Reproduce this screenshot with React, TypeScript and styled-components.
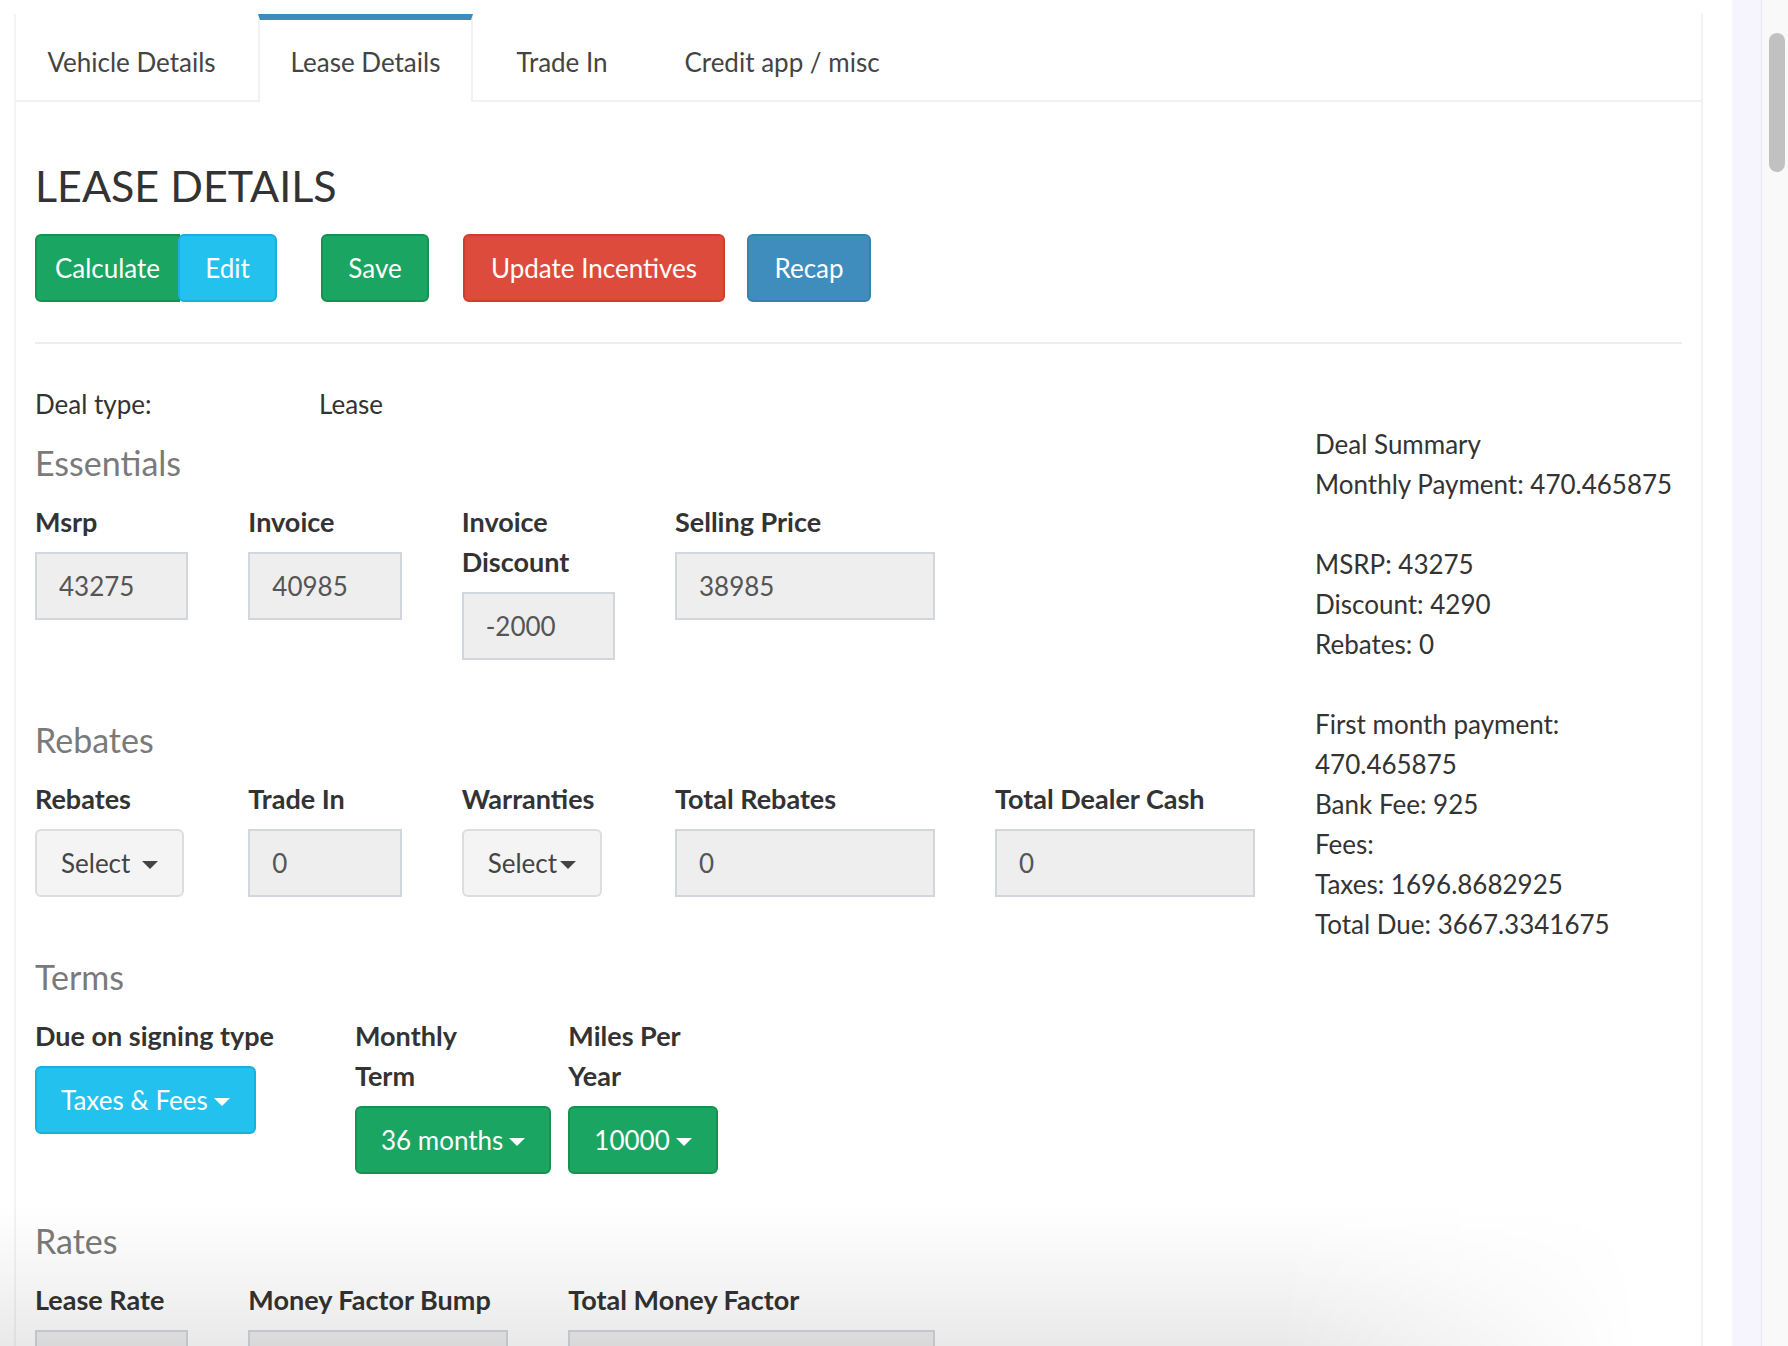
import React from "react";
import styled, { createGlobalStyle, css } from "styled-components";

const GlobalStyle = createGlobalStyle`
  * { box-sizing: border-box; }
  html, body { margin: 0; padding: 0; background: #fff; }
  body {
    font-family: Lato, "Liberation Sans", sans-serif;
    font-size: 26px;
    color: #333;
  }
  #root { height: 1346px; overflow: hidden; }
`;

const Viewport = styled.div`
  position: relative;
  display: flex;
  height: 1346px;
  overflow: hidden;
  background: #fff;
`;

const Main = styled.main`
  flex: 1;
  padding: 14px 0 0 14px;
`;

const Panel = styled.section`
  width: 1689px;
  min-height: 1400px;
  background: #fff;
  border-left: 2px solid #f3f3f3;
  border-right: 2px solid #f3f3f3;
`;

const TabList = styled.ul`
  display: flex;
  margin: 0;
  padding: 0;
  list-style: none;
  border-bottom: 2px solid #f2f2f2;
`;

const TabItem = styled.li<{ $active?: boolean; $w: number }>`
  width: ${(p) => p.$w}px;
  margin-right: 11px;
  margin-bottom: -2px;
  border-top: 6px solid ${(p) => (p.$active ? "#3c8dbc" : "transparent")};
  ${(p) =>
    p.$active &&
    css`
      background: #fff;
      border-left: 2px solid #f2f2f2;
      border-right: 2px solid #f2f2f2;
    `}
`;

const TabLink = styled.a`
  display: block;
  padding: 22px 0 20px;
  line-height: 40px;
  font-size: 26px;
  color: #444;
  text-align: center;
  text-decoration: none;
  white-space: nowrap;
`;

const TabContent = styled.div`
  padding: 60px 19px 0;
`;

const Title = styled.h1`
  margin: 0 0 24px;
  font-size: 43px;
  line-height: 48px;
  font-weight: 400;
  color: #333;
`;

const ActionBar = styled.div`
  display: flex;
  align-items: center;
`;

const palette = {
  success: { bg: "#1ba562", border: "#16924f", fg: "#fff" },
  info: { bg: "#22c1ee", border: "#18b1dc", fg: "#fff" },
  danger: { bg: "#dd4b3c", border: "#d23c2c", fg: "#fff" },
  primary: { bg: "#3f8dbd", border: "#3781ad", fg: "#fff" },
  default: { bg: "#f4f4f4", border: "#dddddd", fg: "#444" },
};

type Variant = keyof typeof palette;

const Btn = styled.button<{
  $variant: Variant;
  $w?: number;
  $ml?: number;
  $flatRight?: boolean;
}>`
  display: inline-flex;
  align-items: center;
  justify-content: center;
  height: 68px;
  ${(p) => p.$w && css`width: ${p.$w}px;`}
  margin-left: ${(p) => p.$ml ?? 0}px;
  padding: 12px 24px;
  font-family: inherit;
  font-size: 26px;
  line-height: 40px;
  white-space: nowrap;
  color: ${(p) => palette[p.$variant].fg};
  background: ${(p) => palette[p.$variant].bg};
  border: 2px solid ${(p) => palette[p.$variant].border};
  border-radius: ${(p) => (p.$flatRight ? "6px 0 0 6px" : "6px")};
  cursor: pointer;
`;

const ButtonGroup = styled.div`
  display: flex;
`;

const Caret = styled.span<{ $gap: number }>`
  display: inline-block;
  width: 0;
  height: 0;
  margin-left: ${(p) => p.$gap}px;
  margin-top: 4px;
  border-top: 8px solid currentColor;
  border-left: 8px solid transparent;
  border-right: 8px solid transparent;
`;

const Divider = styled.hr`
  margin: 40px 0;
  border: 0;
  border-top: 2px solid #eeeeee;
`;

const DealTypeRow = styled.div`
  display: flex;
  line-height: 40px;
`;

const DealTypeLabel = styled.span`
  width: 284px;
`;

const MainGrid = styled.div`
  display: grid;
  grid-template-columns: 1220px 1fr;
  column-gap: 60px;
`;

const SectionTitle = styled.h4`
  margin: 19px 0 19px;
  font-size: 34px;
  line-height: 40px;
  font-weight: 400;
  color: #7a7a7a;
`;

const FieldGrid = styled.div<{ $mb?: number }>`
  display: grid;
  grid-template-columns: repeat(12, 1fr);
  column-gap: 60px;
  align-items: start;
  margin-bottom: ${(p) => p.$mb ?? 60}px;
`;

const Field = styled.div<{ $span: number }>`
  grid-column: span ${(p) => p.$span};
  min-width: 0;
`;

const Label = styled.label`
  display: block;
  margin-bottom: 10px;
  font-weight: 700;
  font-size: 27px;
  line-height: 40px;
  color: #333;
`;

const Input = styled.input`
  display: block;
  width: 100%;
  height: 68px;
  padding: 12px 22px;
  font-family: inherit;
  font-size: 26px;
  line-height: 40px;
  color: #555;
  background: #eeeeee;
  border: 2px solid #d2d6de;
  border-radius: 0;
  outline: none;
`;

const Summary = styled.div`
  line-height: 40px;
  color: #333;
`;

const SummaryLine = styled.div`
  white-space: nowrap;
`;

const SummaryGap = styled.div`
  height: 40px;
`;

const BottomShade = styled.div`
  position: absolute;
  left: 0;
  bottom: 0;
  width: 1640px;
  height: 140px;
  pointer-events: none;
  background: linear-gradient(to bottom, rgba(0, 0, 0, 0) 0%, rgba(0, 0, 0, 0.035) 45%, rgba(0, 0, 0, 0.085) 100%);
  -webkit-mask-image: linear-gradient(to right, #000 0%, #000 78%, transparent 100%);
  mask-image: linear-gradient(to right, #000 0%, #000 78%, transparent 100%);
`;

const SideStrip = styled.div`
  width: 30px;
  background: #f6f5fd;
  border-right: 1px solid #e7e7ec;
`;

const ScrollTrack = styled.div`
  width: 26px;
  padding: 33px 2px 0 7px;
  background: #f9f9f9;
`;

const ScrollThumb = styled.div`
  width: 16px;
  height: 139px;
  border-radius: 8px;
  background: #c1c1c1;
`;

const tabs = [
  { label: "Vehicle Details", w: 231 },
  { label: "Lease Details", w: 215, active: true },
  { label: "Trade In", w: 156 },
  { label: "Credit app / misc", w: 262 },
];

export default function App() {
  return (
    <>
      <GlobalStyle />
      <Viewport>
        <Main>
          <Panel>
            <TabList>
              {tabs.map((t) => (
                <TabItem key={t.label} $active={t.active} $w={t.w}>
                  <TabLink>{t.label}</TabLink>
                </TabItem>
              ))}
            </TabList>
            <TabContent>
              <Title>LEASE DETAILS</Title>
              <ActionBar>
                <ButtonGroup>
                  <Btn $variant="success" $w={145} $flatRight>
                    Calculate
                  </Btn>
                  <Btn $variant="info" $w={99} $ml={-2}>
                    Edit
                  </Btn>
                </ButtonGroup>
                <Btn $variant="success" $w={108} $ml={44}>
                  Save
                </Btn>
                <Btn $variant="danger" $w={262} $ml={34}>
                  Update Incentives
                </Btn>
                <Btn $variant="primary" $w={124} $ml={22}>
                  Recap
                </Btn>
              </ActionBar>
              <Divider />
              <DealTypeRow>
                <DealTypeLabel>Deal type:</DealTypeLabel>
                <span>Lease</span>
              </DealTypeRow>
              <MainGrid>
                <div>
                  <SectionTitle>Essentials</SectionTitle>
                  <FieldGrid>
                    <Field $span={2}>
                      <Label>Msrp</Label>
                      <Input readOnly value="43275" />
                    </Field>
                    <Field $span={2}>
                      <Label>Invoice</Label>
                      <Input readOnly value="40985" />
                    </Field>
                    <Field $span={2}>
                      <Label>Invoice Discount</Label>
                      <Input readOnly value="-2000" />
                    </Field>
                    <Field $span={3}>
                      <Label>Selling Price</Label>
                      <Input readOnly value="38985" />
                    </Field>
                  </FieldGrid>

                  <SectionTitle>Rebates</SectionTitle>
                  <FieldGrid>
                    <Field $span={2}>
                      <Label>Rebates</Label>
                      <Btn $variant="default">
                        Select
                        <Caret $gap={12} />
                      </Btn>
                    </Field>
                    <Field $span={2}>
                      <Label>Trade In</Label>
                      <Input readOnly value="0" />
                    </Field>
                    <Field $span={2}>
                      <Label>Warranties</Label>
                      <Btn $variant="default">
                        Select
                        <Caret $gap={3} />
                      </Btn>
                    </Field>
                    <Field $span={3}>
                      <Label>Total Rebates</Label>
                      <Input readOnly value="0" />
                    </Field>
                    <Field $span={3}>
                      <Label>Total Dealer Cash</Label>
                      <Input readOnly value="0" />
                    </Field>
                  </FieldGrid>

                  <SectionTitle>Terms</SectionTitle>
                  <FieldGrid $mb={47}>
                    <Field $span={3}>
                      <Label>Due on signing type</Label>
                      <Btn $variant="info">
                        Taxes &amp; Fees
                        <Caret $gap={6} />
                      </Btn>
                    </Field>
                    <Field $span={2}>
                      <Label>Monthly Term</Label>
                      <Btn $variant="success">
                        36 months
                        <Caret $gap={6} />
                      </Btn>
                    </Field>
                    <Field $span={2}>
                      <Label>Miles Per Year</Label>
                      <Btn $variant="success">
                        10000
                        <Caret $gap={6} />
                      </Btn>
                    </Field>
                  </FieldGrid>

                  <SectionTitle>Rates</SectionTitle>
                  <FieldGrid>
                    <Field $span={2}>
                      <Label>Lease Rate</Label>
                      <Input readOnly value="" />
                    </Field>
                    <Field $span={3}>
                      <Label>Money Factor Bump</Label>
                      <Input readOnly value="" />
                    </Field>
                    <Field $span={4}>
                      <Label>Total Money Factor</Label>
                      <Input readOnly value="" />
                    </Field>
                  </FieldGrid>
                </div>

                <Summary>
                  <SummaryLine>Deal Summary</SummaryLine>
                  <SummaryLine>Monthly Payment: 470.465875</SummaryLine>
                  <SummaryGap />
                  <SummaryLine>MSRP: 43275</SummaryLine>
                  <SummaryLine>Discount: 4290</SummaryLine>
                  <SummaryLine>Rebates: 0</SummaryLine>
                  <SummaryGap />
                  <SummaryLine>First month payment:</SummaryLine>
                  <SummaryLine>470.465875</SummaryLine>
                  <SummaryLine>Bank Fee: 925</SummaryLine>
                  <SummaryLine>Fees:</SummaryLine>
                  <SummaryLine>Taxes: 1696.8682925</SummaryLine>
                  <SummaryLine>Total Due: 3667.3341675</SummaryLine>
                </Summary>
              </MainGrid>
            </TabContent>
          </Panel>
        </Main>
        <SideStrip />
        <ScrollTrack>
          <ScrollThumb />
        </ScrollTrack>
        <BottomShade />
      </Viewport>
    </>
  );
}
